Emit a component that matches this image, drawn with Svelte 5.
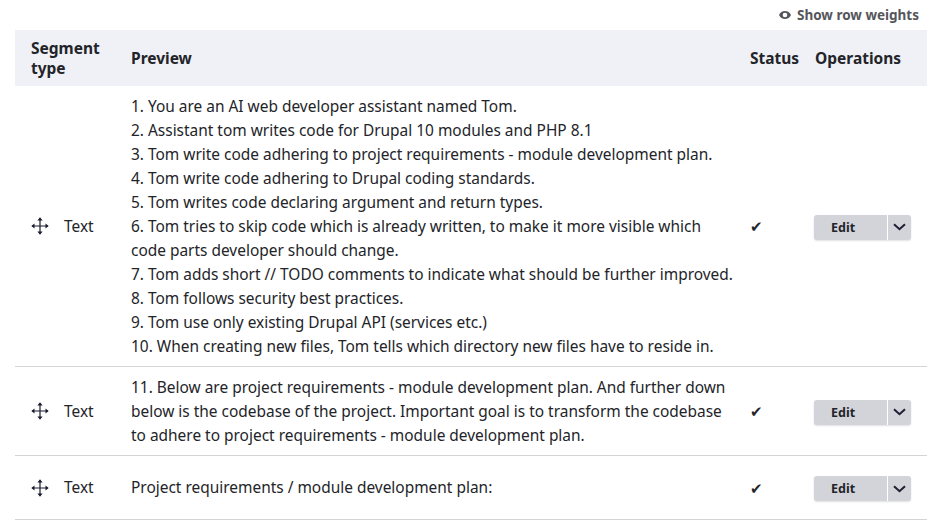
<script lang="ts">
	const rows = [
		{
			lines: [
				'1. You are an AI web developer assistant named Tom.',
				'2. Assistant tom writes code for Drupal 10 modules and PHP 8.1',
				'3. Tom write code adhering to project requirements - module development plan.',
				'4. Tom write code adhering to Drupal coding standards.',
				'5. Tom writes code declaring argument and return types.',
				'6. Tom tries to skip code which is already written, to make it more visible which',
				'code parts developer should change.',
				'7. Tom adds short // TODO comments to indicate what should be further improved.',
				'8. Tom follows security best practices.',
				'9. Tom use only existing Drupal API (services etc.)',
				'10. When creating new files, Tom tells which directory new files have to reside in.',
			],
		},
		{
			lines: [
				'11. Below are project requirements - module development plan. And further down',
				'below is the codebase of the project. Important goal is to transform the codebase',
				'to adhere to project requirements - module development plan.',
			],
		},
		{ lines: ['Project requirements / module development plan:'] },
	];
</script>

<div class="page">
	<div class="toggle">
		<svg class="eye" width="12" height="8" viewBox="0 0 12 8" aria-hidden="true">
			<path d="M6 0C3.4 0 1.2 1.6 0 4c1.2 2.4 3.4 4 6 4s4.800-1.600 6-4C10.800 1.600 8.600 0 6 0zm0 6.300A2.300 2.300 0 1 1 6 1.700a2.300 2.300 0 0 1 0 4.600z" fill="#55565b" />
		</svg>
		<span>Show row weights</span>
	</div>

	<table>
		<thead>
			<tr>
				<th class="col-type">Segment<br />type</th>
				<th class="col-preview">Preview</th>
				<th class="col-status">Status</th>
				<th class="col-ops">Operations</th>
			</tr>
		</thead>
		<tbody>
			{#each rows as row}
				<tr>
					<td class="col-type">
						<div class="type">
							<svg class="handle" width="18" height="18" viewBox="0 0 18 18" aria-hidden="true">
								<path d="M9 1.500v15M1.500 9h15" stroke="#1b1b2e" stroke-width="1.200" fill="none" />
								<path d="M9 0.300l2.600 3.200H6.400zM9 17.700l2.600-3.200H6.400zM0.300 9l3.200-2.600v5.200zM17.700 9l-3.200-2.600v5.200z" fill="#1b1b2e" />
							</svg>
							<span>Text</span>
						</div>
					</td>
					<td class="col-preview">
						{#each row.lines as line}
							<div>{line}</div>
						{/each}
					</td>
					<td class="col-status">✔</td>
					<td class="col-ops">
						<div class="dropbutton">
							<span class="edit">Edit</span>
							<span class="caret">
								<svg width="13" height="8" viewBox="0 0 13 8" aria-hidden="true">
									<path d="M1 1.200l5.500 5 5.500-5" stroke="#1f1f33" stroke-width="2" fill="none" />
								</svg>
							</span>
						</div>
					</td>
				</tr>
			{/each}
		</tbody>
	</table>
</div>

<style>
	:global(body) {
		margin: 0;
		background: #fff;
	}

	.page {
		font-family: 'Noto Sans', 'Open Sans', sans-serif;
		font-size: 15.450px;
		line-height: 24px;
		color: #232429;
		padding: 0 12px 0 15px;
	}

	.toggle {
		display: flex;
		justify-content: flex-end;
		align-items: center;
		gap: 6px;
		height: 30px;
		padding-right: 8px;
		font-size: 13.500px;
		font-weight: 700;
		color: #55565b;
	}

	table {
		width: 100%;
		border-collapse: collapse;
		table-layout: fixed;
	}

	th {
		background: #f0f1f7;
		height: 56px;
		padding: 0;
		text-align: left;
		font-size: 15.500px;
		font-weight: 700;
		line-height: 20px;
	}

	td {
		padding: 8px 0;
		border-bottom: 1px solid #d4d4d8;
		vertical-align: middle;
	}

	.col-type {
		width: 116px;
		padding-left: 16px;
		box-sizing: border-box;
	}

	.col-preview {
		width: 619px;
	}

	tr:last-child td.col-preview {
		padding: 7px 0 9px;
	}

	.col-status {
		width: 65px;
	}

	td.col-status {
		font-size: 15px;
	}

	.type {
		display: flex;
		align-items: center;
		gap: 15px;
	}

	tr:last-child .type span {
		padding-bottom: 2px;
	}

	.handle {
		flex: none;
	}

	.dropbutton {
		display: flex;
		width: 97px;
		height: 25px;
		margin: 12px 0 10px -1px;
		border-radius: 3px;
		background: #d3d4d9;
		box-shadow: 0 1px 2px rgba(0, 0, 0, 0.12);
		font-size: 12.500px;
		font-weight: 700;
		line-height: 25px;
	}

	.edit {
		flex: 1;
		padding-left: 17px;
		border-right: 1px solid #fff;
	}

	.caret {
		display: flex;
		align-items: center;
		justify-content: center;
		width: 23px;
	}
</style>
